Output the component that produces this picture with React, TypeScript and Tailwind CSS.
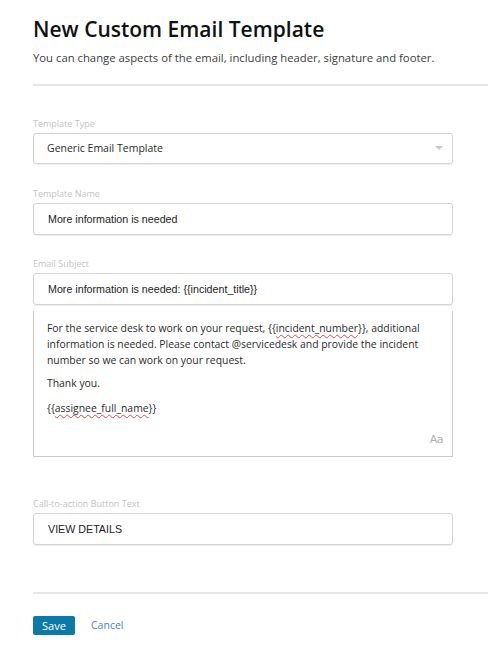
const sans = "font-['Open_Sans',_'Noto_Sans',_sans-serif]";
const arial = "font-['Liberation_Sans',_Arial,_sans-serif]";

function Label({ children }: { children: string }) {
  return <div className={`${sans} text-[9px] leading-[14px] text-[#c4c4c4] mb-[2px]`}>{children}</div>;
}

function Field({ label, value }: { label: string; value: string }) {
  return (
    <div>
      <Label>{label}</Label>
      <div className={`h-[32px] border border-[#d4d4d4] rounded-[3px] shadow-[0_1px_1px_rgba(0,0,0,0.08)] flex items-center pl-[14px] ${arial} text-[10.7px] text-[#222]`}>
        {value}
      </div>
    </div>
  );
}

const squiggle = 'underline decoration-wavy decoration-[#e0454a] decoration-[1px] underline-offset-[2px]';

export default function App() {
  return (
    <div className="w-[488px] h-[655px] bg-white overflow-hidden">
      <div className="pl-[33px] pt-[14px]">
        <h1 className={`${sans} text-[21px] leading-[30px] text-[#111] font-semibold`}>New Custom Email Template</h1>
        <p className={`${sans} text-[11.3px] leading-[18px] text-[#3c3c3c] mt-[5px]`}>
          You can change aspects of the email, including header, signature and footer.
        </p>
        <div className="mt-[17px] h-[2px] bg-[#e6e6e6]" />
      </div>

      <div className="pl-[33px] w-[453px] mt-[31px] flex flex-col">
        <div>
          <Label>Template Type</Label>
          <div className={`h-[31px] border border-[#d4d4d4] rounded-[3px] shadow-[0_1px_1px_rgba(0,0,0,0.08)] flex items-center justify-between pl-[13px] pr-[8px] ${sans} text-[10.5px] text-[#2b2b2b]`}>
            <span>Generic Email Template</span>
            <svg width="8" height="5" viewBox="0 0 8 5" className="mr-[1px]">
              <path d="M0 0 L8 0 L4 4 Z" fill="#c8c8c8" />
            </svg>
          </div>
        </div>

        <div className="mt-[23px]">
          <Field label="Template Name" value="More information is needed" />
        </div>

        <div className="mt-[22px]">
          <Field label="Email Subject" value="More information is needed: {{incident_title}}" />
        </div>

        <div className={`mt-[6px] h-[146px] border border-t-0 border-[#c9c9c9] relative px-[13px] pt-[9px] ${sans} text-[10.4px] leading-[16px] text-[#2b2b2b]`}>
          <p>
            For the service desk to work on your request, {'{{'}
            <span className={squiggle}>incident_number</span>
            {'}}'}, additional information is needed. Please contact @servicedesk and provide the incident number so we can work on your request.
          </p>
          <p className="mt-[7px]">Thank you.</p>
          <p className="mt-[9px]">
            {'{{'}
            <span className={squiggle}>assignee_full_name</span>
            {'}}'}
          </p>
          <span className="absolute right-[9px] bottom-[8px] font-['DejaVu_Sans',_sans-serif] text-[11px] text-[#b0b0b0] tracking-[-0.5px]">Aa</span>
        </div>

        <div className="mt-[40px]">
          <Field label="Call-to-action Button Text" value="VIEW DETAILS" />
        </div>
      </div>

      <div className="pl-[33px] mt-[47px]">
        <div className="h-[2px] bg-[#e6e6e6]" />
        <div className="flex items-center mt-[22px] gap-[16px]">
          <button className={`${sans} h-[19px] w-[42px] rounded-[2px] bg-[#0b7aa8] text-white text-[11px] leading-[19px]`}>Save</button>
          <span className={`${sans} text-[10.5px] text-[#4a83c2]`}>Cancel</span>
        </div>
      </div>
    </div>
  );
}
